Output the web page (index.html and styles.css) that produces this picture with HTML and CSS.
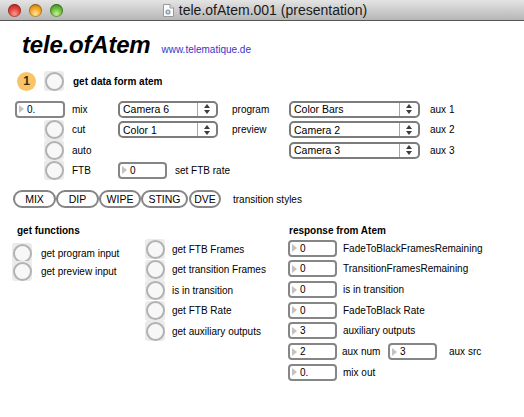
FILE: index.html
```html
<!DOCTYPE html>
<html lang="en">
<head>
<meta charset="utf-8">
<title>tele.ofAtem.001 (presentation)</title>
<link rel="stylesheet" href="styles.css">
</head>
<body>
<div class="titlebar">
  <div class="lights">
    <span class="light red"></span>
    <span class="light yellow"></span>
    <span class="light green"></span>
  </div>
  <div class="wintitle">
    <svg class="docicon" width="11" height="13" viewBox="0 0 11 13">
      <path d="M0.5 0.5 H7 L10.5 4 V12.5 H0.5 Z" fill="#fbfbfb" stroke="#9a9a9a"/>
      <path d="M7 0.5 V4 H10.5" fill="#e2e2e2" stroke="#9a9a9a"/>
      <circle cx="5" cy="8" r="2.6" fill="#8da3b8"/>
      <circle cx="5" cy="8" r="1" fill="#e8eef4"/>
    </svg>
    <span>tele.ofAtem.001 (presentation)</span>
  </div>
  <div></div>
</div>

<main class="patch">
  <header class="head">
    <h1 class="logo">tele.ofAtem</h1>
    <span class="url">www.telematique.de</span>
  </header>

  <div class="getdata">
    <span class="badge">1</span>
    <span class="btn"></span>
    <span class="bold">get data form atem</span>
  </div>

  <div class="controls">
    <div class="num w50"><span class="tri"></span>0.</div>
    <span class="lbl">mix</span>
    <div class="menu m100"><span class="mtext">Camera 6</span><span class="arrows"><i class="up"></i><i class="down"></i></span></div>
    <span class="lbl">program</span>
    <div class="menu m130"><span class="mtext">Color Bars</span><span class="arrows"><i class="up"></i><i class="down"></i></span></div>
    <span class="lbl">aux 1</span>

    <span class="btn ind"></span>
    <span class="lbl">cut</span>
    <div class="menu m100"><span class="mtext">Color 1</span><span class="arrows"><i class="up"></i><i class="down"></i></span></div>
    <span class="lbl">preview</span>
    <div class="menu m130"><span class="mtext">Camera 2</span><span class="arrows"><i class="up"></i><i class="down"></i></span></div>
    <span class="lbl">aux 2</span>

    <span class="btn ind"></span>
    <span class="lbl">auto</span>
    <span></span>
    <span></span>
    <div class="menu m130"><span class="mtext">Camera 3</span><span class="arrows"><i class="up"></i><i class="down"></i></span></div>
    <span class="lbl">aux 3</span>

    <span class="btn ind"></span>
    <span class="lbl">FTB</span>
    <div class="ftb">
      <div class="num w49"><span class="tri"></span>0</div>
      <span class="lbl">set FTB rate</span>
    </div>
  </div>

  <div class="transitions">
    <span class="pill p-mix">MIX</span>
    <span class="pill p-dip">DIP</span>
    <span class="pill p-wipe">WIPE</span>
    <span class="pill p-sting">STING</span>
    <span class="pill p-dve">DVE</span>
    <span class="lbl tlabel">transition styles</span>
  </div>

  <div class="lower">
    <section class="col1">
      <h2 class="heading h-get">get functions</h2>
      <div class="r1"><span class="btn"></span><span class="lbl">get program input</span></div>
      <div class="r1"><span class="btn"></span><span class="lbl">get preview input</span></div>
    </section>

    <section class="col2">
      <div class="r2"><span class="btn"></span><span class="lbl">get FTB Frames</span></div>
      <div class="r2"><span class="btn"></span><span class="lbl">get transition Frames</span></div>
      <div class="r2"><span class="btn"></span><span class="lbl">is in transition</span></div>
      <div class="r2"><span class="btn"></span><span class="lbl">get FTB Rate</span></div>
      <div class="r2"><span class="btn"></span><span class="lbl">get auxiliary outputs</span></div>
    </section>

    <section class="col3">
      <h2 class="heading h-resp">response from Atem</h2>
      <div class="r3"><div class="num w49"><span class="tri"></span>0</div><span class="lbl">FadeToBlackFramesRemaining</span></div>
      <div class="r3"><div class="num w49"><span class="tri"></span>0</div><span class="lbl">TransitionFramesRemaining</span></div>
      <div class="r3"><div class="num w49"><span class="tri"></span>0</div><span class="lbl">is in transition</span></div>
      <div class="r3"><div class="num w49"><span class="tri"></span>0</div><span class="lbl">FadeToBlack Rate</span></div>
      <div class="r3"><div class="num w49"><span class="tri"></span>3</div><span class="lbl">auxiliary outputs</span></div>
      <div class="r3"><div class="num w49"><span class="tri"></span>2</div><span class="lbl auxnum">aux num</span><div class="num w49"><span class="tri"></span>3</div><span class="lbl auxsrc">aux src</span></div>
      <div class="r3"><div class="num w49"><span class="tri"></span>0.</div><span class="lbl">mix out</span></div>
    </section>
  </div>
</main>
</body>
</html>
```

FILE: styles.css
```css
* { box-sizing: border-box; }

html, body {
  margin: 0;
  padding: 0;
  background: #ffffff;
  font-family: "Liberation Sans", Arial, sans-serif;
  font-size: 10px;
  color: #000;
}

/* ---------- window title bar ---------- */
.titlebar {
  height: 21px;
  display: grid;
  grid-template-columns: 1fr auto 1fr;
  align-items: center;
  background: linear-gradient(#e4e4e4, #cdcdcd 50%, #b6b6b6);
  border-bottom: 1px solid #555555;
}

.lights {
  display: flex;
  gap: 8px;
  padding-left: 8px;
  align-items: center;
}

.light {
  width: 13px;
  height: 13px;
  border-radius: 50%;
  box-shadow: inset 0 0 0 1px rgba(0,0,0,0.28);
}
.red    { background: radial-gradient(circle at 50% 75%, #ff9a92 0, #e2463e 45%, #a8140f 100%); }
.yellow { background: radial-gradient(circle at 50% 75%, #ffe29a 0, #f3a92a 45%, #b8690a 100%); }
.green  { background: radial-gradient(circle at 50% 75%, #c8f09a 0, #6cbd3c 45%, #2f7a12 100%); }

.wintitle {
  display: flex;
  align-items: center;
  gap: 5px;
  font-size: 14px;
  color: #1a1a1a;
  padding-left: 6px;
}
.docicon { display: block; }

/* ---------- patch ---------- */
.patch {
  display: flex;
  flex-direction: column;
}

.head {
  display: flex;
  align-items: baseline;
  margin-top: 10px;
  padding-left: 22px;
  height: 28px;
}

.logo {
  margin: 0;
  font-size: 24px;
  line-height: 28px;
  font-weight: bold;
  font-style: italic;
  letter-spacing: -0.2px;
}

.url {
  margin-left: 11px;
  color: #3636c6;
  font-size: 10px;
}

.getdata {
  display: flex;
  align-items: center;
  height: 20px;
  margin-top: 12px;
  padding-left: 17px;
}

.badge {
  width: 19px;
  height: 19px;
  border-radius: 50%;
  background: #f9c466;
  color: #3a2c10;
  font-weight: bold;
  font-size: 12px;
  display: flex;
  align-items: center;
  justify-content: center;
}

.getdata .btn { margin-left: 8px; }
.getdata .bold { margin-left: 9px; }

.bold, .heading {
  font-weight: bold;
}

.lbl { white-space: nowrap; }

/* toggle / bang button */
.btn {
  width: 20px;
  height: 20px;
  flex: none;
  background: #ebebeb;
  border-radius: 3px;
  display: flex;
  align-items: center;
  justify-content: center;
}
.btn::after {
  content: "";
  width: 15px;
  height: 15px;
  border: 2px solid #b2b2b2;
  border-radius: 50%;
  background: #f7f7f7;
}

/* number box */
.num {
  height: 17px;
  border: 2px solid #868686;
  border-radius: 4px;
  background: #fff;
  display: flex;
  align-items: center;
  padding-left: 2px;
  flex: none;
  font-size: 10px;
}
.w50 { width: 50px; }
.w49 { width: 49px; }
.tri {
  width: 0;
  height: 0;
  border-left: 5px solid #c2c2c2;
  border-top: 4px solid transparent;
  border-bottom: 4px solid transparent;
  margin-right: 3px;
}

/* popup menu */
.menu {
  height: 17px;
  border: 2px solid #7c7c7c;
  border-radius: 5px;
  background: #fff;
  display: flex;
  align-items: stretch;
  font-size: 10.5px;
}
.m100 { width: 100px; }
.m130 { width: 131px; }
.mtext {
  flex: 1;
  display: flex;
  align-items: center;
  padding-left: 3px;
}
.arrows {
  width: 19px;
  border-left: 1px solid #a8a8a8;
  display: flex;
  flex-direction: column;
  align-items: center;
  justify-content: center;
  gap: 2px;
}
.arrows i {
  width: 0;
  height: 0;
  border-left: 3px solid transparent;
  border-right: 3px solid transparent;
}
.arrows .up   { border-bottom: 4px solid #3c3c3c; }
.arrows .down { border-top: 4px solid #3c3c3c; }

/* control grid */
.controls {
  display: grid;
  grid-template-columns: 57px 46px 114px 57px 141px auto;
  grid-template-rows: 20px 21px 20px 20px;
  align-items: center;
  margin-top: 8px;
  padding-left: 15px;
}
.ind { margin-left: 29px; }
.ftb {
  grid-column: 3 / 7;
  display: flex;
  align-items: center;
  gap: 8px;
}

/* transition pills */
.transitions {
  display: flex;
  align-items: center;
  margin-top: 10px;
  padding-left: 13px;
  height: 18px;
}
.pill {
  height: 18px;
  border: 2px solid #858585;
  border-radius: 9px;
  display: flex;
  align-items: center;
  justify-content: center;
  font-size: 10.5px;
  flex: none;
}
.p-mix { width: 43px; }
.p-dip { width: 43px; }
.p-wipe { width: 42px; }
.p-sting { width: 47px; }
.p-dve { width: 32px; margin-left: 1px; }
.tlabel { margin-left: 12px; }

/* lower area */
.lower {
  display: grid;
  grid-template-columns: 133px 143px 1fr;
  margin-top: 17px;
  padding-left: 12px;
}

.heading {
  margin: 0;
  font-size: 10px;
  line-height: 12px;
  height: 12px;
}
.h-get { padding-left: 5px; margin-bottom: 7px; }
.h-resp { padding-left: 1px; margin-bottom: 1px; }

.r1 {
  display: flex;
  align-items: center;
  height: 18px;
  gap: 9px;
}

.col2 { padding-top: 14px; }
.r2 {
  display: flex;
  align-items: center;
  height: 20.5px;
  gap: 7px;
}

.r3 {
  display: flex;
  align-items: center;
  height: 20.67px;
  gap: 6px;
}
.auxnum { width: 40px; margin-left: -1px; }
.auxsrc { margin-left: 6px; }
```
